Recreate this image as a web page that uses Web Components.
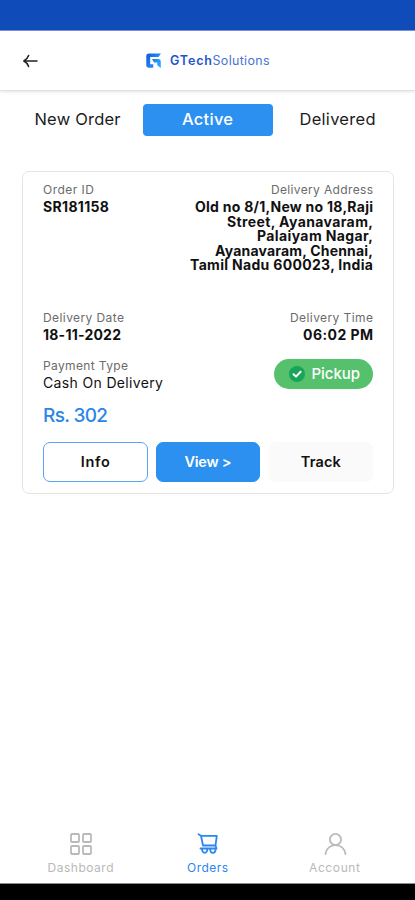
<!DOCTYPE html>
<html lang="en">
<head>
<meta charset="utf-8">
<meta name="viewport" content="width=device-width">
<title>Orders</title>
<style>
html,body{margin:0;height:100%;background:#fff}
body{font-family:Inter,"Noto Sans",sans-serif;color:#111}
</style>
</head>
<body>
<orders-app></orders-app>
<script>
// One line of text, tracked so that it spans the width given by "w".
class FitText extends HTMLElement{
  connectedCallback(){
    if(this.shadowRoot)return;
    this.attachShadow({mode:'open'}).innerHTML=`<style>
      :host{display:block;white-space:nowrap}
      span{display:inline-block;vertical-align:top}
    </style><span><slot></slot></span>`;
    const w=parseFloat(this.getAttribute('w')),s=this.shadowRoot.querySelector('span');
    const n=this.textContent.length;
    const gap=(w-s.getBoundingClientRect().width)/(n-1);
    s.style.letterSpacing=gap+'px';
    s.style.marginRight=-gap+'px';
  }
}

class AppHeader extends HTMLElement{
  connectedCallback(){
    this.attachShadow({mode:'open'}).innerHTML=`<style>
      :host{display:grid;grid-template-columns:146px 24px 42.5px 1fr;align-items:center;box-sizing:border-box;height:60px;padding-top:1px;background:#fff;border-bottom:1px solid #e2e2e2;box-shadow:0 1px 3px #0000001c;color:#1d55cc;font-size:12.500px;line-height:20px}
      .back{margin-left:22px;display:block}
      svg{display:block}
      .b{font-weight:600}
      .s{color:#4a74d2}
    </style>
    <svg class="back" width="17" height="16" viewBox="0 0 17 16" fill="none" stroke="#222" stroke-width="1.5" stroke-linecap="round" stroke-linejoin="round"><path d="M15 8H2.200M6.600 2.500C5.800 4.800 4.400 6.800 1.800 8c2.600 1.200 4 3.200 4.800 5.500"/></svg>
    <svg width="16" height="16" viewBox="0 0 16 16"><defs><linearGradient id="g" x2="1" y2=".6"><stop stop-color="#1553dc"/><stop offset="1" stop-color="#27a5ff"/></linearGradient></defs><path fill="url(#g)" d="M3 .5H15L12.500 4H4.200V11.200H7.300V14.800H3Q.3 14.800.3 12V3.300Q.3.500 3 .500ZM6 6H12Q14.800 6 14.800 9V15L11.300 12.300V9.500H8Z"/></svg>
    <fit-text class="b" w="42">GTech</fit-text><fit-text class="s" w="57">Solutions</fit-text>`;
  }
}

class OrderTabs extends HTMLElement{
  connectedCallback(){
    this.attachShadow({mode:'open'}).innerHTML=`<style>
      :host{display:grid;grid-template-columns:130px 130px 130px;justify-content:center;height:32px;margin-top:13px;font-size:16.5px;line-height:31px;color:#1c1c1c}
      div{display:flex;justify-content:center;border-radius:4px}
      .on{background:#2b90ef;color:#fff;font-weight:500}
    </style><div><fit-text w="86">New Order</fit-text></div><div class="on"><fit-text w="51">Active</fit-text></div><div><fit-text w="76">Delivered</fit-text></div>`;
  }
}

class OrderField extends HTMLElement{
  connectedCallback(){
    this.attachShadow({mode:'open'}).innerHTML=`<style>
      :host{display:flex;flex-direction:column;align-items:flex-start;font-size:14px;line-height:17px;font-weight:700;color:#111}
      :host([end]){align-items:flex-end}
      :host([plain]){font-weight:400}
      .label{font-size:12px;line-height:17px;font-weight:400;color:#6b6b6b}
    </style><fit-text class="label" w="${this.getAttribute('lw')}">${this.getAttribute('label')}</fit-text><slot></slot>`;
  }
}

class ActionButton extends HTMLElement{
  connectedCallback(){
    this.attachShadow({mode:'open'}).innerHTML=`<style>
      :host{display:flex;justify-content:center;box-sizing:border-box;height:40px;border:1px solid #fafafa;border-radius:7px;background:#fafafa;color:#111;font-size:14.500px;font-weight:600;line-height:37px}
      :host([kind=outline]){background:#fff;border-color:#5aa5f3}
      :host([kind=primary]){background:#2b90ef;border-color:#2b90ef;color:#fff}
    </style><slot></slot>`;
  }
}

class StatusPill extends HTMLElement{
  connectedCallback(){
    this.attachShadow({mode:'open'}).innerHTML=`<style>
      :host{display:flex;align-items:center;gap:7px;box-sizing:border-box;width:99.5px;height:30px;padding-left:15px;border-radius:15px;background:#55c16c;color:#fff;font-size:15px;font-weight:500;line-height:28px}
      svg{display:block}
    </style><svg width="16" height="16" viewBox="0 0 16 16"><circle cx="8" cy="8" r="8" fill="#18a558"/><path d="M4.500 8.200 7 10.600 11.600 5.800" fill="none" stroke="#fff" stroke-width="2" stroke-linecap="round" stroke-linejoin="round"/></svg><slot></slot>`;
  }
}

class OrderCard extends HTMLElement{
  connectedCallback(){
    this.attachShadow({mode:'open'}).innerHTML=`<style>
      :host{display:block;box-sizing:border-box;width:372px;height:323px;margin:35px 0 0 22px;border:1.500px solid #e4e4e4;border-radius:7px;padding:8.500px 20px 0;background:#fff}
      .row{display:flex;justify-content:space-between}
      .top{height:128.500px}
      .dates{height:48px}
      .pay{height:45px}
      .address{display:flex;flex-direction:column;align-items:flex-end}
      .address fit-text{line-height:14.500px}
      .address fit-text:first-child{line-height:17px}
      .price{color:#2b86e8;font-size:19px;line-height:24px;font-weight:500;margin-top:2px}
      status-pill{margin-top:2px}
      .actions{display:grid;grid-template-columns:repeat(3,104.500px);justify-content:space-between;margin-top:14px}
    </style>
    <div class="row top">
      <order-field label="Order ID" lw="51"><fit-text w="66">SR181158</fit-text></order-field>
      <order-field end label="Delivery Address" lw="102"><div class="address"><fit-text w="178">Old no 8/1,New no 18,Raji</fit-text><fit-text w="146">Street, Ayanavaram,</fit-text><fit-text w="116">Palaiyam Nagar,</fit-text><fit-text w="158">Ayanavaram, Chennai,</fit-text><fit-text w="183">Tamil Nadu 600023, India</fit-text></div></order-field>
    </div>
    <div class="row dates">
      <order-field label="Delivery Date" lw="81"><fit-text w="78">18-11-2022</fit-text></order-field>
      <order-field end label="Delivery Time" lw="83"><fit-text w="70">06:02 PM</fit-text></order-field>
    </div>
    <div class="row pay">
      <order-field plain label="Payment Type" lw="85"><fit-text w="120">Cash On Delivery</fit-text></order-field>
      <status-pill><fit-text w="48.5">Pickup</fit-text></status-pill>
    </div>
    <fit-text class="price" w="65">Rs. 302</fit-text>
    <div class="actions">
      <action-button kind="outline"><fit-text w="29">Info</fit-text></action-button>
      <action-button kind="primary"><fit-text w="47">View &gt;</fit-text></action-button>
      <action-button><fit-text w="40">Track</fit-text></action-button>
    </div>`;
  }
}

class NavItem extends HTMLElement{
  connectedCallback(){
    this.attachShadow({mode:'open'}).innerHTML=`<style>
      :host{display:flex;flex-direction:column;align-items:center;color:#b9b9b9;font-size:12px;line-height:16px;gap:4px}
      :host([active]){color:#2b86ef}
    </style><slot name="icon"></slot><slot></slot>`;
  }
}

class BottomNav extends HTMLElement{
  connectedCallback(){
    this.attachShadow({mode:'open'}).innerHTML=`<style>
      :host{display:grid;grid-template-columns:repeat(3,127px);justify-content:center;height:51px;margin-top:auto;border-bottom:1px solid #8b8b8b}
      svg{display:block;fill:none;stroke:currentColor;stroke-width:1.800}
    </style>
    <nav-item><svg slot="icon" width="24" height="24" viewBox="0 0 24 24"><rect x="2" y="2" width="8" height="8" rx="1"/><rect x="14" y="2" width="8" height="8" rx="1"/><rect x="2" y="14" width="8" height="8" rx="1"/><rect x="14" y="14" width="8" height="8" rx="1"/></svg><fit-text w="66">Dashboard</fit-text></nav-item>
    <nav-item active><svg slot="icon" width="24" height="24" viewBox="0 0 24 24" stroke-linejoin="round" stroke-linecap="round"><path d="M2.500 2.200 5 3.800H20.800L19.500 13.500H7L5 3.800M19.500 13.500 20.500 16.500H4.500"/><path d="M6 17a2.700 3.800 0 1 0 5.400 0M14.200 17a2.700 3.800 0 1 0 5.400 0"/></svg><fit-text w="41">Orders</fit-text></nav-item>
    <nav-item><svg slot="icon" width="24" height="24" viewBox="0 0 24 24" stroke-linecap="round"><circle cx="12.500" cy="7.500" r="5.600"/><path d="M2.500 22C3.500 16.500 7.500 13.200 12.500 13.200S21.500 16.500 22.500 22"/></svg><fit-text w="51">Account</fit-text></nav-item>`;
  }
}

class OrdersApp extends HTMLElement{
  connectedCallback(){
    this.attachShadow({mode:'open'}).innerHTML=`<style>
      :host{display:flex;flex-direction:column;height:900px;width:415px;overflow:hidden;background:#fff}
      .status{height:31px;background:#104cb9;flex:none;border-bottom:1px solid #7792dc;box-sizing:border-box}
      .system{height:16px;background:#000;flex:none}
      order-tabs,app-header,order-card,bottom-nav{flex:none}
    </style><div class="status"></div><app-header></app-header><order-tabs></order-tabs><order-card></order-card><bottom-nav></bottom-nav><div class="system"></div>`;
  }
}
customElements.define('fit-text',FitText);
customElements.define('app-header',AppHeader);
customElements.define('order-tabs',OrderTabs);
customElements.define('order-field',OrderField);
customElements.define('action-button',ActionButton);
customElements.define('status-pill',StatusPill);
customElements.define('order-card',OrderCard);
customElements.define('nav-item',NavItem);
customElements.define('bottom-nav',BottomNav);
customElements.define('orders-app',OrdersApp);
</script>
</body>
</html>
